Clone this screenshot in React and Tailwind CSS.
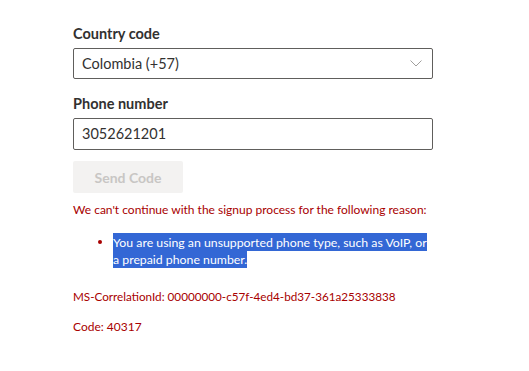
export default function App() {
  return (
    <div className="w-[529px] h-[371px] bg-white" style={{ fontFamily: '"Segoe UI", Lato, sans-serif' }}>
      <div className="pl-[73px] pt-[24px] w-[433px]">
        <div className="text-[14.5px] leading-[20px] font-bold text-[#323130]">Country code</div>
        <div className="mt-[4px] h-[31px] border border-[#605e5c] rounded-[2px] flex items-center justify-between pl-[8px] pr-[10px]">
          <span className="text-[14.5px] text-[#323130]">Colombia (+57)</span>
          <svg width="12" height="7" viewBox="0 0 12 7" fill="none">
            <path d="M0.5 0.5 L6 6 L11.5 0.5" stroke="#a19f9d" strokeWidth="1" />
          </svg>
        </div>
        <div className="mt-[15px] text-[14.5px] leading-[20px] font-bold text-[#323130]">Phone number</div>
        <div className="mt-[4px] h-[32px] border border-[#605e5c] rounded-[2px] flex items-center pl-[8px]">
          <span className="text-[14.5px] text-[#323130]">3052621201</span>
        </div>
        <div className="mt-[11px] w-[110px] h-[32px] bg-[#f3f2f1] rounded-[2px] flex items-center justify-center text-[14px] font-bold text-[#c8c6c4]">
          Send Code
        </div>
        <div className="mt-[8px] text-[12px] leading-[18px] text-[#a80000] whitespace-nowrap">
          We can't continue with the signup process for the following reason:
        </div>
        <ul className="mt-[14px] pl-[40px] list-disc text-[#a80000] text-[12.3px] leading-[17.5px] w-[357px]">
          <li>
            <span className="bg-[#3367d5] text-white py-[1.5px] [box-decoration-break:clone]">You are using an unsupported phone type, such as VoIP, or a prepaid phone number.</span>
          </li>
        </ul>
        <div className="mt-[19px] text-[11.7px] leading-[18px] text-[#a80000] whitespace-nowrap">
          MS-CorrelationId: 00000000-c57f-4ed4-bd37-361a25333838
        </div>
        <div className="mt-[13px] text-[12px] leading-[18px] text-[#a80000]">Code: 40317</div>
      </div>
    </div>
  );
}
